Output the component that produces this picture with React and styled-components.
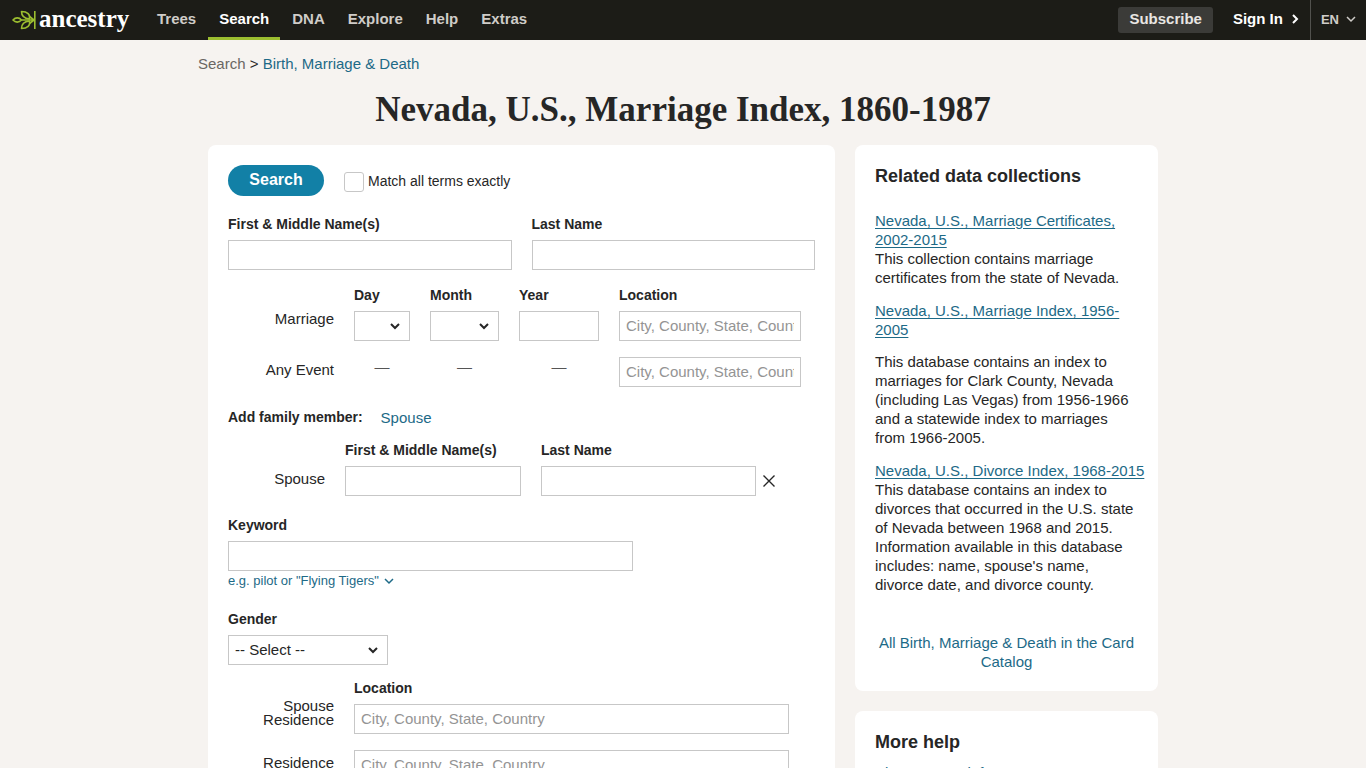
import styled, { createGlobalStyle } from "styled-components";

const theme = {
  sans: `"Liberation Sans", Arial, sans-serif`,
  serif: `"Liberation Serif", "Times New Roman", serif`,
  text: "#262626",
  link: "#1d6a87",
  green: "#9cbe30",
  border: "#c7c7c7",
};

const NAV_LINKS = ["Trees", "Search", "DNA", "Explore", "Help", "Extras"];
const LOCATION_HINT = "City, County, State, Country";
const DAYS = Array.from({ length: 31 }, (_, index) => index + 1);
const MONTHS = [
  "Jan",
  "Feb",
  "Mar",
  "Apr",
  "May",
  "Jun",
  "Jul",
  "Aug",
  "Sep",
  "Oct",
  "Nov",
  "Dec",
];

const COLLECTIONS = [
  {
    title: "Nevada, U.S., Marriage Certificates, 2002-2015",
    text: "This collection contains marriage certificates from the state of Nevada.",
  },
  {
    title: "Nevada, U.S., Marriage Index, 1956-2005",
    text: "This database contains an index to marriages for Clark County, Nevada (including Las Vegas) from 1956-1966 and a statewide index to marriages from 1966-2005.",
    spaced: true,
  },
  {
    title: "Nevada, U.S., Divorce Index, 1968-2015",
    text: "This database contains an index to divorces that occurred in the U.S. state of Nevada between 1968 and 2015. Information available in this database includes: name, spouse's name, divorce date, and divorce county.",
    oneLine: true,
  },
];

function LeafIcon() {
  return (
    <svg width="24" height="20" viewBox="0 0 24 20" fill="none" aria-hidden="true">
      <g stroke={theme.green} strokeWidth="1.6" strokeLinejoin="round">
        <path d="M1 10C3.500 7.200 7 7.200 9.500 10C7 12.800 3.500 12.800 1 10Z" />
        <path d="M9.500 1.500C15.500 1.500 18.500 4.500 17.500 9C12.500 8.500 9.500 6 9.500 1.500Z" />
        <path d="M9.500 18.500C15.500 18.500 18.500 15.500 17.500 11C12.500 11.500 9.500 14 9.500 18.500Z" />
        <path d="M9.500 10H22.500M17.500 6.500L22 10L17.500 13.500" />
      </g>
      <path d="M22.800 1V19" stroke={theme.green} strokeWidth="1.600" />
    </svg>
  );
}

function Chevron({ size = 10, width = 1.5, right = false }) {
  return (
    <svg width={size} height={size} viewBox="0 0 10 10" fill="none" aria-hidden="true">
      <path
        d={right ? "M3 1L7 5L3 9" : "M1 3L5 7L9 3"}
        stroke="currentColor"
        strokeWidth={width}
      />
    </svg>
  );
}

export default function App() {
  return (
    <>
      <GlobalStyle />
      <StyledHeader>
        <StyledLogo href="#" aria-label="Ancestry home">
          <LeafIcon />
          <StyledLogoText>ancestry</StyledLogoText>
        </StyledLogo>
        <StyledNav>
          {NAV_LINKS.map((name) => (
            <StyledNavLink key={name} href="#" $active={name === "Search"}>
              {name}
            </StyledNavLink>
          ))}
        </StyledNav>
        <StyledSubscribe href="#">Subscribe</StyledSubscribe>
        <StyledSignIn href="#">
          Sign In
          <Chevron right width={2} />
        </StyledSignIn>
        <StyledLanguage type="button">
          EN
          <Chevron />
        </StyledLanguage>
      </StyledHeader>

      <StyledPage>
        <StyledBreadcrumb aria-label="Breadcrumb">
          <StyledCrumb href="#">Search</StyledCrumb> &gt;{" "}
          <StyledLink href="#">Birth, Marriage &amp; Death</StyledLink>
        </StyledBreadcrumb>
        <StyledTitle>Nevada, U.S., Marriage Index, 1860-1987</StyledTitle>

        <StyledColumns>
          <SearchForm />
          <aside>
            <RelatedCard />
            <StyledSideCard>
              <StyledCardTitle>More help</StyledCardTitle>
              <StyledHelpList>
                <li>
                  <StyledLink href="#">About source info</StyledLink>
                </li>
              </StyledHelpList>
            </StyledSideCard>
          </aside>
        </StyledColumns>
      </StyledPage>
    </>
  );
}

function SearchForm() {
  return (
    <StyledForm onSubmit={(event) => event.preventDefault()}>
      <StyledTopRow>
        <StyledSearchButton type="submit">Search</StyledSearchButton>
        <StyledExact>
          <StyledCheckbox type="checkbox" />
          Match all terms exactly
        </StyledExact>
      </StyledTopRow>

      <StyledNameRow>
        <StyledField>
          <StyledLabel htmlFor="first">First &amp; Middle Name(s)</StyledLabel>
          <StyledInput id="first" />
        </StyledField>
        <StyledField>
          <StyledLabel htmlFor="last">Last Name</StyledLabel>
          <StyledInput id="last" />
        </StyledField>
      </StyledNameRow>

      <StyledEventGrid>
        <StyledRowLabel $raised>Marriage</StyledRowLabel>
        <StyledField>
          <StyledLabel htmlFor="day">Day</StyledLabel>
          <StyledSelect id="day" defaultValue="">
            <option value=""></option>
            {DAYS.map((day) => (
              <option key={day}>{day}</option>
            ))}
          </StyledSelect>
        </StyledField>
        <StyledField>
          <StyledLabel htmlFor="month">Month</StyledLabel>
          <StyledSelect id="month" defaultValue="">
            <option value=""></option>
            {MONTHS.map((month) => (
              <option key={month}>{month}</option>
            ))}
          </StyledSelect>
        </StyledField>
        <StyledField>
          <StyledLabel htmlFor="year">Year</StyledLabel>
          <StyledInput id="year" />
        </StyledField>
        <StyledField>
          <StyledLabel htmlFor="place">Location</StyledLabel>
          <StyledInput id="place" placeholder={LOCATION_HINT} />
        </StyledField>

        <StyledRowLabel as="label" htmlFor="anyPlace">
          Any Event
        </StyledRowLabel>
        <StyledDash>—</StyledDash>
        <StyledDash>—</StyledDash>
        <StyledDash>—</StyledDash>
        <StyledInput id="anyPlace" placeholder={LOCATION_HINT} />
      </StyledEventGrid>

      <StyledFamilyRow>
        <StyledLabel as="span">Add family member:</StyledLabel>
        <StyledLink href="#">Spouse</StyledLink>
      </StyledFamilyRow>

      <StyledSpouseGrid>
        <StyledRowLabel>Spouse</StyledRowLabel>
        <StyledField>
          <StyledLabel htmlFor="spouseFirst">First &amp; Middle Name(s)</StyledLabel>
          <StyledInput id="spouseFirst" />
        </StyledField>
        <StyledField>
          <StyledLabel htmlFor="spouseLast">Last Name</StyledLabel>
          <StyledInput id="spouseLast" />
        </StyledField>
        <StyledRemove type="button" aria-label="Remove spouse">
          <svg width="12" height="12" viewBox="0 0 12 12" aria-hidden="true">
            <path
              d="M0.500 0.500L11.500 11.500M11.500 0.500L0.500 11.500"
              stroke="#262626"
              strokeWidth="1.400"
            />
          </svg>
        </StyledRemove>
      </StyledSpouseGrid>

      <StyledKeyword>
        <StyledLabel htmlFor="keyword">Keyword</StyledLabel>
        <StyledInput id="keyword" />
        <StyledHint type="button">
          e.g. pilot or "Flying Tigers"
          <Chevron />
        </StyledHint>
      </StyledKeyword>

      <StyledGender>
        <StyledLabel htmlFor="gender">Gender</StyledLabel>
        <StyledSelect id="gender">
          <option>-- Select --</option>
          <option>Male</option>
          <option>Female</option>
        </StyledSelect>
      </StyledGender>

      <StyledResidenceGrid>
        <StyledRowLabel $twoLines>Spouse Residence</StyledRowLabel>
        <StyledField>
          <StyledLabel htmlFor="spousePlace">Location</StyledLabel>
          <StyledInput id="spousePlace" placeholder={LOCATION_HINT} />
        </StyledField>
        <StyledRowLabel as="label" htmlFor="residence">
          Residence
        </StyledRowLabel>
        <StyledInput id="residence" placeholder={LOCATION_HINT} />
      </StyledResidenceGrid>
    </StyledForm>
  );
}

function RelatedCard() {
  return (
    <StyledSideCard>
      <StyledCardTitle>Related data collections</StyledCardTitle>
      <StyledCollections>
        {COLLECTIONS.map(({ title, text, spaced, oneLine }) => (
          <li key={title}>
            <StyledCollectionLink href="#" $oneLine={oneLine}>
              {title}
            </StyledCollectionLink>
            <StyledDescription $spaced={spaced}>{text}</StyledDescription>
          </li>
        ))}
      </StyledCollections>
      <StyledCatalog>
        <StyledLink href="#">
          All Birth, Marriage &amp; Death in the Card Catalog
        </StyledLink>
      </StyledCatalog>
    </StyledSideCard>
  );
}

const GlobalStyle = createGlobalStyle`
  *, *::before, *::after {
    box-sizing: border-box;
  }
  body {
    margin: 0;
    background: #f6f3f0;
    color: ${theme.text};
    font: 15px/19px ${theme.sans};
  }
  button, input, select {
    font: inherit;
    color: inherit;
  }
  ul, p {
    margin: 0;
    padding: 0;
    list-style: none;
  }
`;

const StyledHeader = styled.header`
  display: flex;
  align-items: center;
  height: 40px;
  padding-left: 12px;
  background: #1c1c17;
  color: #fff;
`;

const StyledLogo = styled.a`
  display: flex;
  align-items: center;
  gap: 3px;
  width: 134px;
  color: #fff;
  text-decoration: none;
`;

const StyledLogoText = styled.span`
  padding-bottom: 2px;
  font: bold 25px/32px ${theme.serif};
`;

const StyledNav = styled.nav`
  display: flex;
  flex: 1;
  gap: 1px;
`;

const StyledNavLink = styled.a`
  height: 40px;
  padding: 0 11px;
  border-bottom: 3px solid ${({ $active }) => ($active ? theme.green : "transparent")};
  color: ${({ $active }) => ($active ? "#fff" : "#cfccc8")};
  font-weight: bold;
  line-height: 38px;
  text-decoration: none;
`;

const StyledSubscribe = styled.a`
  padding: 2px 11px 4px;
  border-radius: 3px;
  background: #3b3b38;
  color: #e8e6e3;
  font-weight: bold;
  line-height: 20px;
  text-decoration: none;
`;

const StyledSignIn = styled.a`
  display: flex;
  align-items: center;
  gap: 7px;
  padding: 0 10px 2px 20px;
  color: #fff;
  font-weight: bold;
  line-height: 38px;
  text-decoration: none;
`;

const StyledLanguage = styled.button`
  display: flex;
  align-items: center;
  gap: 7px;
  height: 40px;
  padding: 0 10px 2px;
  border: 0;
  border-left: 1px solid #51514d;
  background: none;
  color: #cfccc8;
  font-size: 13px;
  font-weight: bold;
`;

const StyledPage = styled.main`
  max-width: 970px;
  margin: 0 auto;
  padding-top: 14px;
`;

const StyledBreadcrumb = styled.nav`
  line-height: 20px;
`;

const StyledLink = styled.a`
  color: ${theme.link};
  text-decoration: none;
`;

const StyledCrumb = styled(StyledLink)`
  color: #6a6763;
`;

const StyledCollectionLink = styled(StyledLink)`
  text-decoration: underline;
  text-underline-offset: 2px;
  white-space: ${({ $oneLine }) => ($oneLine ? "nowrap" : "normal")};
`;

const StyledTitle = styled.h1`
  margin: 16px 0 15px;
  font: bold 35px/40px ${theme.serif};
  text-align: center;
`;

const StyledColumns = styled.div`
  display: grid;
  grid-template-columns: minmax(0, 1fr) 303px;
  align-items: start;
  gap: 20px;
  padding: 0 10px 20px;
`;

const StyledForm = styled.form`
  padding: 20px;
  border-radius: 8px;
  background: #fff;
`;

const StyledTopRow = styled.div`
  display: flex;
  align-items: center;
  gap: 20px;
  margin-bottom: 18px;
`;

const StyledSearchButton = styled.button`
  width: 96px;
  height: 31px;
  padding: 0 0 2px;
  border: 0;
  border-radius: 16px;
  background: #1280a6;
  color: #fff;
  font-size: 16px;
  font-weight: bold;
`;

const StyledExact = styled.label`
  display: flex;
  align-items: center;
  gap: 4px;
  padding-top: 2px;
  font-size: 14px;
`;

const StyledCheckbox = styled.input`
  appearance: none;
  width: 20px;
  height: 20px;
  margin: 0;
  border: 1px solid ${theme.border};
  border-radius: 3px;
  background: #fff;
  &:checked {
    background: #1280a6;
  }
`;

const StyledField = styled.div`
  display: flex;
  flex-direction: column;
  gap: 6px;
  min-width: 0;
`;

const StyledLabel = styled.label`
  font-size: 14px;
  font-weight: bold;
  line-height: 20px;
`;

const StyledInput = styled.input`
  width: 100%;
  height: 30px;
  padding: 0 6px 1px;
  border: 1px solid ${theme.border};
  border-radius: 0;
  background: #fff;
  &::placeholder {
    color: #949494;
  }
`;

const StyledSelect = styled.select`
  appearance: none;
  width: 100%;
  height: 30px;
  padding: 0 20px 1px 6px;
  border: 1px solid ${theme.border};
  border-radius: 0;
  background: #fff
    url("data:image/svg+xml,%3Csvg xmlns='http://www.w3.org/2000/svg' width='10' height='10' fill='none'%3E%3Cpath d='M1 3L5 7L9 3' stroke='%23262626' stroke-width='2'/%3E%3C/svg%3E")
    no-repeat right 9px center;
`;

const StyledNameRow = styled.div`
  display: grid;
  grid-template-columns: 1fr 1fr;
  gap: 20px;
  margin-bottom: 15px;
`;

const StyledRowLabel = styled.div`
  align-self: end;
  padding-bottom: ${({ $raised, $twoLines }) =>
    $raised ? "15px" : $twoLines ? "7px" : "10px"};
  line-height: 14px;
  text-align: right;
`;

const StyledEventGrid = styled.div`
  display: grid;
  grid-template-columns: 106px 56px 69px 80px 182px;
  gap: 16px 20px;
  margin-bottom: 20px;
`;

const StyledDash = styled.span`
  color: #555;
  text-align: center;
`;

const StyledFamilyRow = styled.div`
  display: flex;
  align-items: center;
  gap: 18px;
  margin-bottom: 13px;
`;

const StyledSpouseGrid = styled.div`
  display: grid;
  grid-template-columns: 97px 176px 215px 12px;
  column-gap: 20px;
  margin-bottom: 19px;
`;

const StyledRemove = styled.button`
  display: flex;
  align-self: end;
  align-items: center;
  height: 30px;
  margin-left: -13px;
  padding: 0;
  border: 0;
  background: none;
`;

const StyledKeyword = styled(StyledField)`
  width: 405px;
  margin-bottom: 19px;
`;

const StyledHint = styled.button`
  display: flex;
  align-items: center;
  align-self: start;
  gap: 5px;
  margin-top: -6px;
  padding: 0;
  border: 0;
  background: none;
  color: ${theme.link};
  font-size: 13px;
  line-height: 19px;
`;

const StyledGender = styled(StyledField)`
  width: 160px;
  margin-bottom: 13px;
`;

const StyledResidenceGrid = styled.div`
  display: grid;
  grid-template-columns: 106px 435px;
  gap: 16px 20px;
`;

const StyledSideCard = styled.section`
  margin-bottom: 20px;
  padding: 20px;
  border-radius: 8px;
  background: #fff;
`;

const StyledCardTitle = styled.h2`
  margin: 0;
  font-size: 18px;
  line-height: 22px;
`;

const StyledCollections = styled.ul`
  display: grid;
  grid-template-columns: minmax(0, 1fr);
  gap: 14px;
  margin: 24px 0 39px;
`;

const StyledDescription = styled.p`
  margin-top: ${({ $spaced }) => ($spaced ? "13px" : "0")};
`;

const StyledCatalog = styled.p`
  text-align: center;
`;

const StyledHelpList = styled.ul`
  margin-top: 10px;
`;
